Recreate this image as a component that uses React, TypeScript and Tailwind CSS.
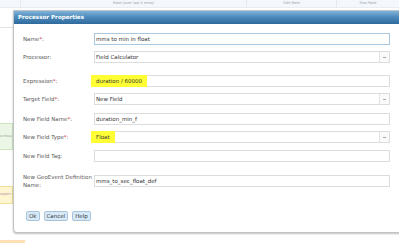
import React from "react";

const font = { fontFamily: '"DejaVu Sans", Verdana, sans-serif' };

function Label({ text, required }: { text: React.ReactNode; required?: boolean }) {
  return (
    <div className="w-[71px] shrink-0 whitespace-nowrap text-[5.5px] leading-[8px] text-[#5a5a5a]">
      {text}
      {required && <span className="text-[#e03030]">*</span>}:
    </div>
  );
}

function TextBox({ children, focused }: { children?: React.ReactNode; focused?: boolean }) {
  return (
    <div
      className={`flex h-[12px] w-[296px] items-center border px-[1px] text-[5.5px] text-[#333] ${
        focused ? "border-[#a9c9e2]" : "border-[#dcdcdc]"
      }`}
    >
      {children}
    </div>
  );
}

function Select({ children }: { children?: React.ReactNode }) {
  return (
    <div className="flex h-[12px] w-[296px] items-stretch border border-[#dcdcdc] text-[5.5px] text-[#333]">
      <div className="flex flex-1 items-center px-[1px]">{children}</div>
      <div className="flex w-[10px] items-center justify-center border-l border-[#e2e2e2] bg-[#fafafa]">
        <div className="h-[1px] w-[3px] bg-[#9aa8b8]" />
      </div>
    </div>
  );
}

function Highlight({ children }: { children: React.ReactNode }) {
  return <span className="-ml-[5px] bg-[#ffff33] px-[5px] py-[1.5px]">{children}</span>;
}

export default function App() {
  return (
    <div className="relative h-[243px] w-[399px] overflow-hidden bg-white" style={font}>
      {/* Background grid */}
      <div className="flex h-[8px] border-b border-[#e8edf3] bg-[#f4f7fb] text-[3.6px] text-[#9aa3ad]">
        <div className="w-[21px] border-r border-[#e4e9ef]" />
        <div className="flex w-[226px] items-center justify-center border-r border-[#e4e9ef]">
          Rate (over last 5 mins)
        </div>
        <div className="flex w-[90px] items-center justify-center border-r border-[#e4e9ef]">Edit Rate</div>
        <div className="flex flex-1 items-center justify-center">Max Rate</div>
      </div>
      <div className="h-[20px] border-b border-[#e2e2e2]" />
      <div className="mt-[95px] flex h-[27px] w-[13px] items-center overflow-hidden border border-l-0 border-[#cfe5c2] bg-[#ecf6e6] text-[3.6px] text-[#9aa]">
        ocessor
      </div>
      <div className="mt-[36px] flex h-[18px] w-[13px] items-center overflow-hidden border border-l-0 border-[#f2df9a] bg-[#fff5d1] text-[3.6px] text-[#b9a]">
        appen
      </div>
      <div className="mt-[36px] h-[4px] w-[25px] bg-[#fde1b4]" />

      {/* Dialog */}
      <div className="absolute left-[13px] top-[10px] w-[400px] rounded-bl-[4px] border border-[#bfc4c9] bg-white shadow-[0_1px_2px_rgba(0,0,0,0.25)]">
        <div className="flex h-[13px] items-center bg-gradient-to-b from-[#7fb3d9] via-[#4a88b9] to-[#2f6a9c] pl-[4px] text-[5.6px] font-bold text-white">
          Processor Properties
        </div>
        <div className="flex flex-col pl-[9px] pt-[9px] pb-[11px]">
          <div className="flex items-center">
            <Label text="Name" required />
            <TextBox focused>mms to min in float</TextBox>
          </div>
          <div className="mt-[6px] flex items-center">
            <Label text="Processor" />
            <Select>Field Calculator</Select>
          </div>
          <div className="mt-[12px] flex items-center">
            <Label text="Expression" required />
            <TextBox>
              <Highlight>duration / 60000</Highlight>
            </TextBox>
          </div>
          <div className="mt-[6px] flex items-center">
            <Label text="Target Field" required />
            <Select>New Field</Select>
          </div>
          <div className="mt-[8px] flex items-center">
            <Label text="New Field Name" required />
            <TextBox>duration_min_f</TextBox>
          </div>
          <div className="mt-[6px] flex items-center">
            <Label text="New Field Type" required />
            <Select>
              <Highlight>Float</Highlight>
            </Select>
          </div>
          <div className="mt-[7px] flex items-center">
            <Label text="New Field Tag" />
            <TextBox />
          </div>
          <div className="mt-[11px] flex items-center">
            <div className="w-[71px] shrink-0 whitespace-nowrap text-[5.5px] leading-[8px] text-[#5a5a5a]">
              New GeoEvent Definition
              <br />
              Name:
            </div>
            <TextBox>mms_to_sec_float_def</TextBox>
          </div>
          <div className="mt-[22px] flex gap-[4px] pl-[3px]">
            {["Ok", "Cancel", "Help"].map((b) => (
              <div
                key={b}
                className="flex h-[10px] items-center rounded-[2px] border border-[#a7c4de] bg-[#d9e8f5] px-[2px] text-[5.5px] text-[#2f3d4a]"
              >
                {b}
              </div>
            ))}
          </div>
        </div>
      </div>
    </div>
  );
}
